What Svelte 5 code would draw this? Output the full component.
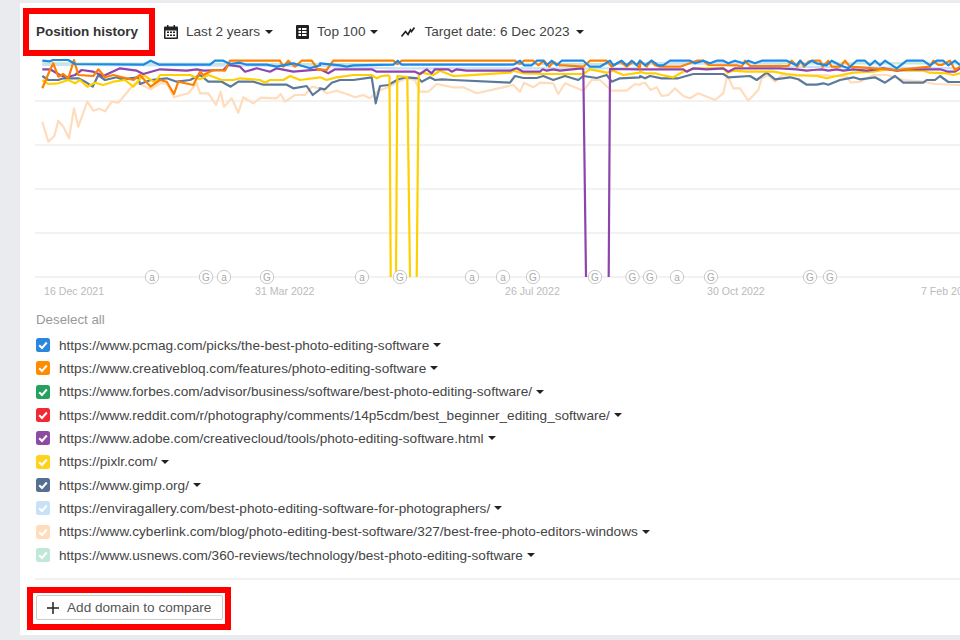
<script>
  const seg = (off, s) => s.trim().split(/\s+/).map(p => { const [x, y] = p.split(',').map(Number); return `${(off + x / 3).toFixed(1)},${(y / 3).toFixed(1)}`; }).join(' ');
  const line = (a, b, c) => 'M' + [a && seg(0, a), b && seg(320, b), c && seg(640, c)].filter(Boolean).join(' ');

  const series = [
    { color: '#c4e8d6', d: line('127,190 960,192', '0,192 960,192', '0,190 960,190') },
    { color: '#ffdcbc', d: line('127,365 145,425 163,408 175,362 190,380 207,415 222,325 235,380 262,305 280,332 298,326 315,334 335,305 355,308 400,255 415,250 452,268 480,250 500,250 522,292 545,285 565,280 590,250 600,280 625,280 648,315 662,275 672,320 695,295 715,338 730,292 760,310 782,293 830,295 842,282 855,305 885,285 915,285 935,260 960,265',
        '0,265 20,280 50,272 80,282 105,292 130,285 150,295 175,272 205,262 235,245 260,235 285,240 300,275 325,275 350,252 400,262 430,262 470,280 580,255 600,275 612,248 640,262 660,248 700,250 715,282 735,250 790,272 815,240 840,240 875,272 920,272 945,252 960,255',
        '0,252 15,248 32,270 50,262 65,288 85,285 105,265 130,288 150,295 175,280 225,300 250,280 262,225 280,265 300,265 325,302 355,270 365,235 385,225 405,245 425,225 475,228 540,225 620,230 632,248 660,245 700,225 740,225 790,240 850,245 885,252 960,255') },
    { color: '#c8e2f8', d: line('127,195 960,198', '0,198 220,205 260,205 960,205', '0,190 400,190 440,200 960,205') },
    { color: '#5b7a9b', d: line('127,228 145,240 175,240 190,235 235,235 255,245 278,260 295,225 315,240 350,232 365,238 415,232 420,252 452,240 500,235 530,245 570,240 600,225 625,245 665,245 692,260 715,245 760,245 790,254 860,254 880,265 920,258 938,285 960,268',
        '0,265 15,268 35,248 60,240 100,240 155,232 167,310 180,258 205,255 235,238 260,232 295,235 305,245 330,232 345,240 365,238 400,240 570,248 585,228 610,234 650,234 670,228 700,240 735,228 775,240 790,228 830,234 860,225 875,245 900,235 960,232',
        '0,228 15,235 30,228 65,235 115,235 160,222 250,222 265,232 330,228 350,240 380,218 405,238 450,232 475,238 500,254 530,254 550,250 565,254 600,240 640,232 660,238 705,232 735,248 765,228 790,248 850,248 860,240 885,240 900,228 925,246 960,246') },
    { color: '#ffd000', d: line('127,240 145,252 175,250 205,240 225,250 240,240 262,260 285,248 310,255 340,245 375,240 400,260 430,225 465,248 480,225 570,225 600,238 625,225 665,240 700,240 720,235 780,240 795,248 810,240 850,240 870,228 900,240 960,232',
        '0,232 20,240 50,232 100,225 155,225 170,235 185,228 208,226') },
    { color: '#ffd000', d: 'M389.5,75.4 L390.7,277 M396,277 L397.3,76 L407.3,77 L410,277 M416.7,277 L418.7,75 L423,72 ' + seg(320, '305,218 340,225 360,212 400,228 440,226 570,218 580,212 610,220 680,222 790,222 810,208 830,212 860,218 880,212 910,225 960,218') + ' ' + seg(640, '0,215 15,220 45,220 65,225 100,232 130,215 170,205 250,205 262,218 280,212 320,215 400,215 440,222 470,225 530,228 560,235 590,228 640,218 700,215 740,208 770,212 850,212 870,218 920,220 940,225 960,220') },
    { color: '#8e44ad', d: line('127,208 150,208 180,225 200,232 225,225 245,210 280,215 310,228 360,205 410,212 430,222 480,208 560,212 590,208 610,212 670,210 685,195 720,200 735,215 770,205 810,215 830,205 880,215 960,208',
        '0,208 25,220 45,208 155,208 170,215 285,215 300,222 320,208 335,220 345,208 385,208 395,215 410,208 440,212 570,212 590,205 610,215 660,215 668,208 680,212 700,208 720,212 785,205 790,208 798,831') },
    { color: '#8e44ad', d: 'M608.7,277 L610,69 ' + seg(640, '0,208 130,208 140,215 160,205 200,208 250,205 265,215 285,205 420,205 470,208 500,212 520,210 545,208 565,212 590,208 610,212 640,208 680,212 710,208 730,205 770,212 800,208 900,208 925,215 945,215 960,205') },
    { color: '#ff8000', d: line('127,265 150,210 160,190 175,230 190,222 205,235 222,180 235,225 280,228 295,208 315,232 340,225 400,240 420,225 452,260 480,240 500,245 522,282 535,245 580,255 600,215 610,225 640,210 675,212 690,182 840,182 850,200 865,182 885,200 905,182 935,182 955,210',
        '0,208 20,210 40,182 220,182 233,192 245,182 585,182 600,192 612,182 640,182 655,196 672,182 688,200 700,185 718,196 730,196 790,200 810,182 860,182 875,200 900,185 920,200 940,185 960,205',
        '0,182 20,200 33,182 45,196 60,200 120,200 170,182 190,182 205,195 290,196 305,200 315,182 330,198 445,198 455,182 472,200 482,182 492,200 505,185 520,182 540,182 548,200 565,182 575,200 600,200 615,182 630,200 700,205 770,210 870,200 880,182 895,195 905,195 930,182 945,210 960,200') },
    { color: '#1e88e5', d: line('127,182 150,184 160,180 205,180 225,192 430,194 452,182 478,194 630,194 645,182 670,182 690,192 720,188 740,194 800,194 830,200 880,190 930,205 960,196',
        '0,190 60,196 80,200 100,196 220,194 233,182 245,194 580,194 600,182 612,196 635,196 650,182 670,182 680,196 695,182 710,196 725,182 790,182 810,200 840,200 870,182 880,196 905,182 920,196 935,182 950,196',
        '0,182 15,196 35,182 55,196 70,196 90,182 150,182 165,190 190,182 210,190 230,182 250,182 265,190 285,182 310,190 325,182 345,190 365,182 440,182 470,196 480,182 495,196 515,182 530,190 560,196 575,182 600,196 625,205 650,182 675,182 690,196 705,182 720,196 735,182 770,205 800,182 850,182 870,196 890,182 910,182 925,196 945,182 960,196') }
  ];

  const grid = [101, 145, 189, 233, 277];
  const marks = [[152,'a'],[206,'G'],[224,'a'],[267,'G'],[362,'a'],[400,'G'],[472,'a'],[503,'a'],[533,'G'],[595,'G'],[632.5,'G'],[650,'G'],[677,'a'],[711,'G'],[810,'G'],[830,'G']];
  const dates = [[44,'16 Dec 2021'],[255,'31 Mar 2022'],[505,'26 Jul 2022'],[707,'30 Oct 2022'],[921,'7 Feb 2023']];

  const rows = [
    ['#2b86de', 'https://www.pcmag.com/picks/the-best-photo-editing-software'],
    ['#ff8c00', 'https://www.creativebloq.com/features/photo-editing-software'],
    ['#25a05f', 'https://www.forbes.com/advisor/business/software/best-photo-editing-software/'],
    ['#ee2b35', 'https://www.reddit.com/r/photography/comments/14p5cdm/best_beginner_editing_software/'],
    ['#8e4aa0', 'https://www.adobe.com/creativecloud/tools/photo-editing-software.html'],
    ['#ffd21e', 'https://pixlr.com/'],
    ['#566f90', 'https://www.gimp.org/'],
    ['#c9e1f7', 'https://enviragallery.com/best-photo-editing-software-for-photographers/'],
    ['#ffdcbc', 'https://www.cyberlink.com/blog/photo-editing-best-software/327/best-free-photo-editors-windows'],
    ['#c0e8d6', 'https://www.usnews.com/360-reviews/technology/best-photo-editing-software']
  ];
</script>

<div class="page">
  <section class="panel">
    <header class="toolbar">
      <h2 class="title">Position history</h2>
      <span class="tool">
        <svg width="14" height="14" viewBox="0 0 14 14"><path fill="#222" fill-rule="evenodd" d="M1 1.500h2V0h1.500v1.500h5V0H11v1.500h2a1 1 0 0 1 1 1V13a1 1 0 0 1-1 1H1a1 1 0 0 1-1-1V2.500a1 1 0 0 1 1-1zM1.500 5.500v7h11v-7z"/><path fill="#222" d="M3 6.500h2V8H3zM6 6.500h2V8H6zM9 6.500h2V8H9zM3 9.500h2V11H3zM6 9.500h2V11H6zM9 9.500h2V11H9z"/></svg>
        <span>Last 2 years</span><i class="caret"></i>
      </span>
      <span class="tool shift">
        <svg width="13" height="14" viewBox="0 0 13 14"><path fill="#222" fill-rule="evenodd" d="M1 0h11a1 1 0 0 1 1 1v12a1 1 0 0 1-1 1H1a1 1 0 0 1-1-1V1a1 1 0 0 1 1-1zM2.500 3v2h2.500V3zm3.500 0v2h4.500V3zM2.500 6v2h2.500V6zm3.500 0v2h4.500V6zM2.500 9v2h2.500V9zm3.500 0v2h4.500V9z"/></svg>
        <span>Top 100</span><i class="caret"></i>
      </span>
      <span class="tool wide">
        <svg width="14" height="14" viewBox="0 0 14 14"><path fill="none" stroke="#222" stroke-width="1.700" d="M0.500 11.500L4.500 6.500L7 9.500L9.500 5L10.500 6.500L13.500 2.500"/></svg>
        <span>Target date: 6 Dec 2023</span><i class="caret"></i>
      </span>
      <span class="hl hl-top"></span>
    </header>

    <svg class="chart" width="940" height="246" viewBox="20 57 940 246">
      <defs><clipPath id="plot"><rect x="35" y="59" width="925" height="218"/></clipPath></defs>
      {#each grid as y}<line x1="35" x2="960" y1={y} y2={y} stroke="#f2f2f2" stroke-width="2"/>{/each}
      <g clip-path="url(#plot)" fill="none" stroke-width="2.200" stroke-linejoin="round">
        {#each series as s}<path d={s.d} stroke={s.color}/>{/each}
      </g>
      {#each marks as [x, l]}
        <circle cx={x} cy="277" r="6.700" fill="#fff" stroke="#c8c8c8"/>
        <text {x} y="280.500" text-anchor="middle" class="mark">{l}</text>
      {/each}
      {#each dates as [x, t]}<text {x} y="295" class="date">{t}</text>{/each}
    </svg>

    <div class="legend">
      <div class="deselect">Deselect all</div>
      {#each rows as [c, url]}
        <div class="row">
          <span class="check" style:background={c}><svg width="14" height="14" viewBox="0 0 14 14"><path d="M3.200 7.200L6 10L10.800 4.500" fill="none" stroke="#fff" stroke-width="2"/></svg></span>
          <span class="url">{url}</span><i class="caret"></i>
        </div>
      {/each}
    </div>

    <footer class="foot">
      <button class="add">
        <svg width="12" height="12" viewBox="0 0 12 12"><path d="M6 0v12M0 6h12" stroke="#222" stroke-width="1.500"/></svg>
        Add domain to compare
      </button>
      <span class="hl hl-bottom"></span>
    </footer>
  </section>
</div>

<style>
  :global(body) { margin: 0; background: #e9ebee; }
  .page { height: 640px; padding: 3px 0 0 20px; box-sizing: border-box; overflow: hidden; font-family: "Liberation Sans", Arial, sans-serif; color: #444; }
  .panel { background: #fff; height: 632px; }
  .toolbar { position: relative; height: 54px; display: flex; align-items: center; padding: 3px 0 0 16px; box-sizing: border-box; gap: 22px; font-size: 13.600px; color: #444; }
  .title { margin: 0 4px 0 0; font-size: 13.500px; font-weight: 700; color: #333; width: 102px; white-space: nowrap; }
  .tool { display: inline-flex; align-items: center; gap: 8px; white-space: nowrap; }
  .shift { margin-left: 1px; }
  .wide { gap: 9px; margin-left: 1px; }
  .caret { display: inline-block; flex: none; width: 0; height: 0; border: 4px solid transparent; border-top: 4.500px solid #222; border-bottom: 0; margin-left: -3px; }
  .hl { position: absolute; border: 6px solid #f00; box-sizing: border-box; pointer-events: none; }
  .hl-top { left: 3px; top: 5px; width: 132px; height: 48px; }
  .chart { display: block; }
  .mark { font: 10px "Liberation Sans", Arial, sans-serif; fill: #aaa; }
  .date { font: 10.600px "Liberation Sans", Arial, sans-serif; fill: #bbb; }
  .legend { padding: 9px 0 0 16px; }
  .deselect { font-size: 13.300px; color: #999; line-height: 16px; margin-bottom: 5.500px; }
  .row { height: 23.330px; display: flex; align-items: center; font-size: 13.600px; color: #444; white-space: nowrap; }
  .check { width: 14px; height: 14px; border-radius: 2.500px; margin-right: 9px; flex: none; display: block; }
  .check svg { display: block; }
  .row .caret { margin-left: 4px; }
  .foot { position: relative; margin: 11.500px 0 0 15px; border-top: 2px solid #f2f2f2; padding: 15px 0 0 1px; }
  .add { display: inline-flex; align-items: center; gap: 8px; height: 25px; width: 187px; padding: 0 0 0 10px; box-sizing: border-box; background: #fff; border: 1px solid #ccc; border-radius: 2px; font: 13.600px "Liberation Sans", Arial, sans-serif; color: #555; }
  .hl-bottom { left: -8px; top: 7px; width: 204px; height: 43px; }
</style>
